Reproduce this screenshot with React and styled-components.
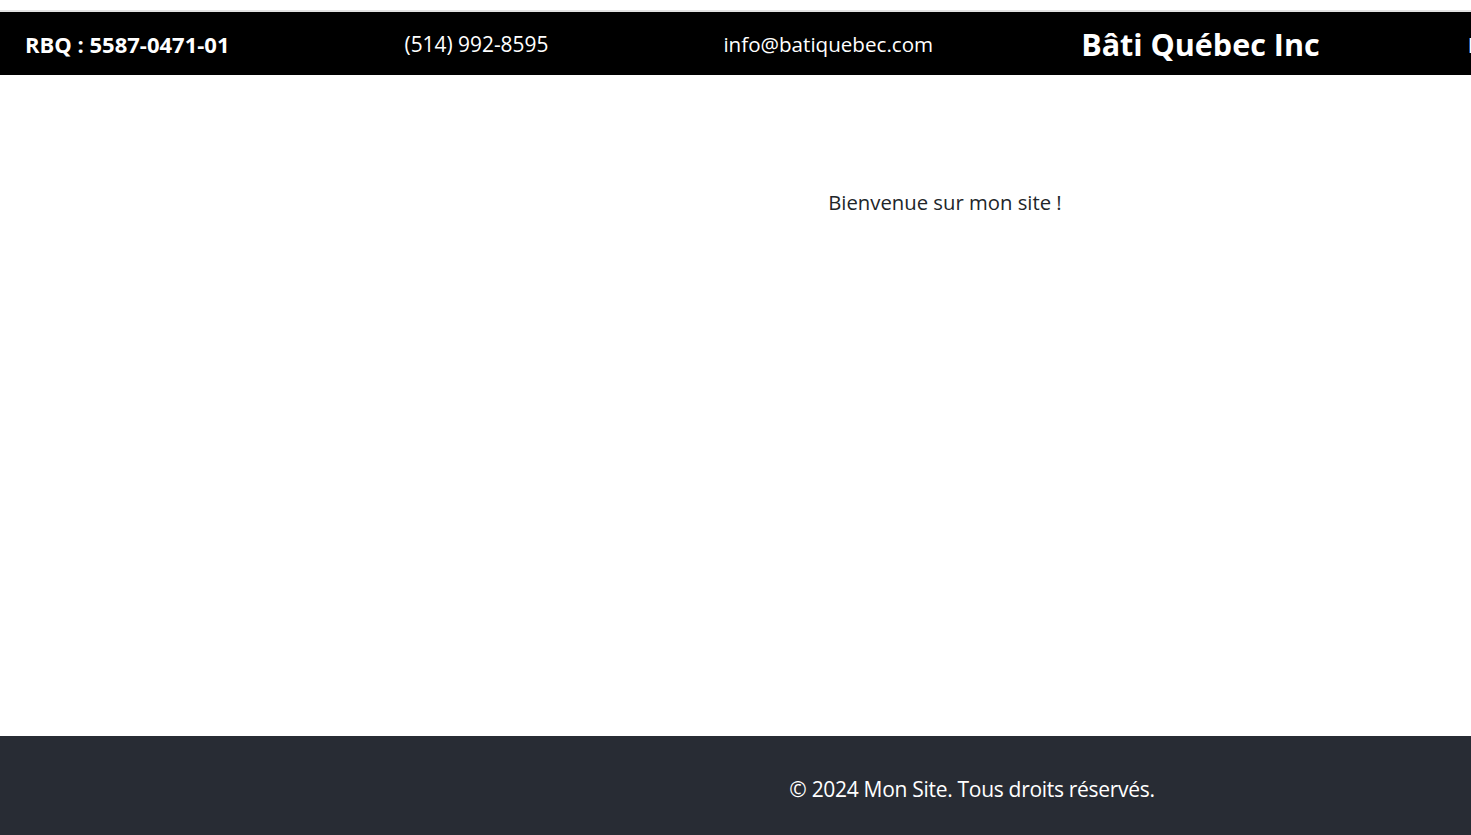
import styled, { createGlobalStyle } from "styled-components";

const GlobalStyle = createGlobalStyle`
  html, body {
    margin: 0;
    padding: 0;
    background: #ffffff;
    overflow: hidden;
  }
  body {
    font-family: "Open Sans", "Noto Sans", sans-serif;
  }
`;

const Page = styled.div`
  width: 1890px;
  display: flex;
  flex-direction: column;
  padding-top: 10px;
  box-sizing: border-box;
`;

const TopBar = styled.header`
  border-top: 2px solid #e2e2e2;
  background: #000;
  color: #fff;
  height: 63px;
  display: flex;
  align-items: center;
  padding-left: 25px;
  white-space: nowrap;
`;

const BarItem = styled.span`
  font-size: ${(p) => p.$size || 21}px;
  font-weight: ${(p) => (p.$bold ? 700 : 400)};
  margin-left: ${(p) => p.$offset || 0}px;
`;

const Main = styled.main`
  height: 661px;
  padding-top: 113px;
  box-sizing: border-box;
  text-align: center;
`;

const Welcome = styled.p`
  margin: 0;
  font-size: 20.3px;
  color: #212529;
`;

const Footer = styled.footer`
  background: #282c34;
  color: #fff;
  height: 100px;
  display: flex;
  align-items: center;
  justify-content: center;
  padding-left: 54px;
  padding-top: 6px;
  box-sizing: border-box;
  font-size: 21px;
  letter-spacing: -0.3px;
`;

export default function App() {
  return (
    <>
      <GlobalStyle />
      <Page>
        <TopBar>
          <BarItem $bold $size={22}>
            RBQ : 5587-0471-01
          </BarItem>
          <BarItem $offset={175} $size={20.9}>
            (514) 992-8595
          </BarItem>
          <BarItem $offset={175} $size={20.6}>
            info@batiquebec.com
          </BarItem>
          <BarItem $offset={148} $size={30.5} $bold>
            Bâti Québec Inc
          </BarItem>
          <BarItem $offset={148} $size={22} $bold>
            Rénovation
          </BarItem>
        </TopBar>
        <Main>
          <Welcome>Bienvenue sur mon site !</Welcome>
        </Main>
        <Footer>© 2024 Mon Site. Tous droits réservés.</Footer>
      </Page>
    </>
  );
}
